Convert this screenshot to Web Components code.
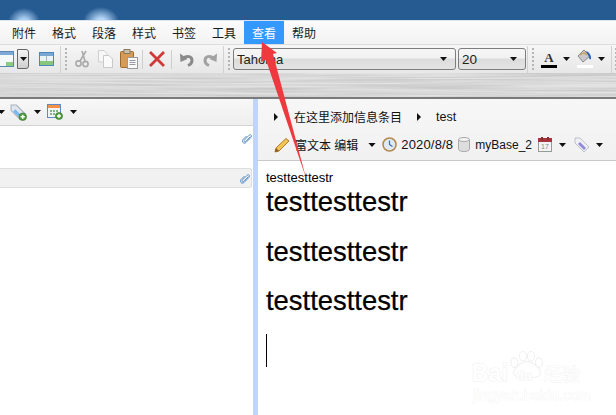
<!DOCTYPE html>
<html lang="zh"><head><meta charset="utf-8"><title>myBase</title>
<style>html,body{margin:0;padding:0;width:616px;height:415px;overflow:hidden;background:#fff;font-family:"Liberation Sans","Noto Sans CJK SC",sans-serif}</style>
</head><body>
<app-shell>
  <title-bar></title-bar>
  <menu-bar></menu-bar>
  <main-toolbar></main-toolbar>
  <brushed-strip></brushed-strip>
  <work-area></work-area>
</app-shell>
<arrow-overlay></arrow-overlay>
<baidu-mark></baidu-mark>
<script>
function def(name, html){
  customElements.define(name, class extends HTMLElement{
    constructor(){super();this.attachShadow({mode:'open'}).innerHTML=html;}
  });
}
const FONT='"Liberation Sans","Noto Sans CJK SC",sans-serif';
const caret=(w=9,h=5)=>`<svg width="${w}" height="${h}" viewBox="0 0 9 5"><path d="M0 0H9L4.5 5Z" fill="#111"/></svg>`;
const addBadge=`<circle cx="12" cy="12" r="3.6" fill="#4f9a3c" stroke="#2f6e22" stroke-width=".5"/><path d="M10 12h4M12 10v4" stroke="#fff" stroke-width="1.3"/>`;
const undo=c=>`<path d="M4.500 6C8 3.200 13 4.300 13 8.500 13 10.800 11.200 12.500 9 13.500" fill="none" stroke="${c}" stroke-width="3"/><path d="M1 1.500 1.500 10 8.500 7Z" fill="${c}"/>`;

def('app-shell',`<style>:host{display:flex;flex-direction:column;width:616px;height:415px;overflow:hidden}</style><slot></slot>`);

def('title-bar',`<style>:host{display:block;height:20px;flex:none;border-bottom:1px solid #dbe4ee;
background:radial-gradient(ellipse 16px 14px at 24px 22px,#a9cef3 0,#a9cef3 25%,rgba(169,206,243,0) 100%),radial-gradient(ellipse 18px 15px at 101px 22px,#b4d6f6 0,#b4d6f6 25%,rgba(180,214,246,0) 100%),#265b92}</style>`);

def('menu-bar',`<style>:host{display:flex;height:23px;flex:none;padding-left:4px;background:linear-gradient(#fbfbfb,#f3f3f3);font:12px ${FONT};color:#1a1a1a}
span{width:40px;display:flex;align-items:center;justify-content:center}
.on{background:#3399ff;color:#fff}</style>
<span>附件</span><span>格式</span><span>段落</span><span>样式</span><span>书签</span><span>工具</span><span class="on">查看</span><span>帮助</span>`);

const grip=`<svg style="display:block" width="4" height="22" viewBox="0 0 4 22"><g fill="#b5b5b5"><rect x="1" y="0" width="2" height="2"/><rect x="1" y="4" width="2" height="2"/><rect x="1" y="8" width="2" height="2"/><rect x="1" y="12" width="2" height="2"/><rect x="1" y="16" width="2" height="2"/><rect x="1" y="20" width="2" height="2"/></g></svg>`;
def('main-toolbar',`<style>
:host{display:flex;align-items:center;height:29px;flex:none;box-sizing:border-box;border-top:1px solid #dcdcdc;background:linear-gradient(#f6f6f6,#e7e7e7);font:13px "Liberation Sans",sans-serif;color:#222;overflow:hidden}
.viewbtn{width:14px;height:16px;flex:none;box-sizing:border-box;border:1px solid #5b87b5;border-left:0;background:linear-gradient(#7ea9d6 0 3px,transparent 3px),linear-gradient(#8ccb82,#8ccb82) right bottom/7px 4px no-repeat,#f4f8f6}
.drop{width:12px;height:20px;flex:none;box-sizing:border-box;border:1px solid #666;border-radius:0 3px 3px 0;background:linear-gradient(#f4f4f4,#cfcfcf);display:flex;align-items:center;justify-content:center;margin-left:3px}
.sep{width:1px;height:27px;background:#d2d2d2;flex:none}
.sm{width:1px;height:19px;background:#cfcfcf;flex:none}
svg{flex:none;display:block}
.combo{box-sizing:border-box;height:22px;border:1px solid #7d7d7d;border-radius:3px;background:linear-gradient(#f6f6f6 0,#f2f2f2 45%,#dcdcdc 50%,#e4e4e4);display:flex;align-items:center;justify-content:space-between;padding:0 8px 0 3px;flex:none}
</style>
<span class="viewbtn"></span><span class="drop">${caret(7,4)}</span>
<svg style="margin-left:10px" width="15" height="14" viewBox="0 0 15 14"><rect x=".5" y=".5" width="14" height="13" fill="#eaf3f4" stroke="#4d86bb"/><rect x="1" y="1" width="13" height="3" fill="#79a6d2"/><path d="M7.500 4v9" stroke="#9fb7c9"/><rect x="1" y="9" width="13" height="4" fill="#86c77c"/></svg>
<span class="sep" style="margin-left:6px"></span>
<span style="margin-left:3px">${grip}</span>
<svg style="margin-left:6px" width="16" height="18" viewBox="0 0 16 18"><g fill="none" stroke="#aaa" stroke-width="1.6"><path d="M12 1 6 11M8 1l3 10"/><circle cx="4.500" cy="13.500" r="2.600"/><circle cx="11.500" cy="14" r="2.600"/></g></svg>
<svg style="margin-left:7px" width="17" height="18" viewBox="0 0 17 18"><path d="M1.500.5H7l3 3V12H1.500Z" fill="#f7f7f7" stroke="#cfcfcf"/><path d="M6.500 5.500H12l3.500 3.500V17.500H6.500Z" fill="#fafafa" stroke="#c9c9c9"/></svg>
<svg style="margin-left:6px" width="18" height="20" viewBox="0 0 18 20"><rect x=".5" y="2.500" width="13" height="16" rx="1" fill="#d69c55" stroke="#9c6a2e"/><rect x="4" y="0.500" width="6" height="4" fill="#c9c0ae" stroke="#8c7a5c"/><rect x="7.500" y="8.500" width="10" height="11" fill="#fafafa" stroke="#9a9a9a"/><path d="M9.500 11.500h6M9.500 13.500h6M9.500 15.500h6" stroke="#999"/></svg>
<span class="sm" style="margin-left:4px"></span>
<svg style="margin-left:6px" width="16" height="16" viewBox="0 0 16 16"><path d="M2 2 14 14M14 2 2 14" stroke="#d0393a" stroke-width="2.8" stroke-linecap="square"/></svg>
<span class="sm" style="margin-left:6px"></span>
<svg style="margin-left:7px" width="16" height="15" viewBox="0 0 16 15">${undo('#8a8a8a')}</svg>
<svg style="margin-left:7px;transform:scaleX(-1)" width="16" height="15" viewBox="0 0 16 15">${undo('#a2a2a2')}</svg>
<span class="sep" style="margin-left:5px"></span>
<span style="margin-left:3px">${grip}</span>
<span class="combo" style="width:223px;margin-left:2px"><span>Tahoma</span>${caret(7,4)}</span>
<span class="combo" style="width:68px;margin-left:2px"><span style="font-size:13.500px">20</span>${caret(7,4)}</span>
<span class="sep" style="margin-left:1px"></span>
<span style="margin-left:3px">${grip}</span>
<span style="display:flex;flex-direction:column;align-items:center;margin-left:6px;width:16px;flex:none;font:bold 13px 'Liberation Serif',serif;line-height:13px;color:#333">A<span style="display:block;width:16px;height:3px;background:#000;margin-top:1px"></span></span>
<span style="margin-left:6px">${caret(7,4)}</span>
<svg style="margin-left:7px" width="16" height="20" viewBox="0 0 16 20"><path d="M7 1 1 7l5 6 7-6Z" fill="#c9c9c9" stroke="#888"/><path d="M9 2c3 1 5.500 4 5 8-1 1-2 0-2-2Z" fill="#2d62b8"/><path d="M3 6c2-2 5-3 7 0" fill="none" stroke="#c9a15c" stroke-width="1.500"/><rect y="16" width="16" height="3" fill="#fff"/></svg>
<span style="margin-left:5px">${caret(7,4)}</span>
<span class="sep" style="margin-left:6px"></span>
<span style="margin-left:2px">${grip}</span>`);

def('brushed-strip',`<style>:host{display:block;height:24px;flex:none;border-bottom:2px solid #7a7a7a;background-color:#dcdcdc;overflow:hidden;position:relative}
svg{position:absolute;inset:0;width:100%;height:100%}</style>
<svg preserveAspectRatio="none"><filter id="b" x="0" y="0" width="100%" height="100%" color-interpolation-filters="sRGB"><feTurbulence type="fractalNoise" baseFrequency="0.006 0.6" numOctaves="3" seed="4"/><feColorMatrix values="0 0 0 0 .68  0 0 0 0 .68  0 0 0 0 .68  0.9 0 0 0 -0.25"/></filter><rect width="100%" height="100%" fill="#e2e2e2"/><rect width="100%" height="100%" filter="url(#b)"/></svg>`);

def('work-area',`<style>:host{display:flex;flex:1;min-height:0}
.split{width:5px;flex:none;background:#c1d5f8}</style>
<left-pane></left-pane><span class="split"></span><right-pane></right-pane>`);

const clip=`<svg width="10" height="11" viewBox="0 0 10 11"><path d="M8.500 3.500 3.600 8.600c-1 1-2.400-.4-1.400-1.400L7 2.300c1.600-1.600 3.600.5 2 2L4 9.500c-2 2-5-.8-3-3L4.500 3" fill="none" stroke="#5b8fc7" stroke-width="1"/></svg>`;
def('left-pane',`<style>:host{display:flex;flex-direction:column;width:253px;flex:none;background:#fff;overflow:hidden}
.tools{height:27px;flex:none;box-sizing:border-box;border-bottom:1px solid #d4d4d4;background:linear-gradient(#f8f8f8,#eeeeee);display:flex;align-items:center}
svg{display:block;flex:none}
.list{height:42px;flex:none;display:flex;justify-content:flex-end;padding:7px 1px 0 0;box-sizing:border-box}
.row{height:20px;flex:none;box-sizing:border-box;border:1px solid #dedede;border-left:0;border-radius:0 3px 3px 0;background:#f1f1f1;display:flex;justify-content:flex-end;align-items:center;padding-right:1px;width:252px}
</style>
<div class="tools">
  <span style="margin-left:-2px">${caret(7,4)}</span>
  <svg style="margin-left:5px" width="17" height="17" viewBox="0 0 16 16"><path d="M1 1h5l8 8-5 5-8-8Z" fill="#dfe6ee" stroke="#aab2ba"/><path d="M5 5l5 5-2 2-5-5Z" fill="#74b8ef"/>${addBadge}</svg>
  <span style="margin-left:7px">${caret(7,4)}</span>
  <svg style="margin-left:6px" width="16" height="16" viewBox="0 0 16 16"><rect x=".5" y=".5" width="13" height="13" fill="#f3f3f3" stroke="#5a8bc4"/><rect x="1" y="1" width="12" height="3" fill="#f0924a"/><path d="M3 6h2v2H3ZM6 6h2v2H6ZM9 6h2v2H9ZM3 9h2v2H3ZM6 9h2v2H6Z" fill="#7fb48a"/>${addBadge}</svg>
  <span style="margin-left:7px">${caret(7,4)}</span>
</div>
<div class="list">${clip}</div>
<div class="row">${clip}</div>`);

def('right-pane',`<style>:host{display:flex;flex-direction:column;flex:1;min-width:0}</style><note-head></note-head><note-body></note-body>`);

def('note-head',`<style>:host{display:flex;flex-direction:column;height:62px;flex:none;box-sizing:border-box;border-bottom:1px solid #c9c9c9;background:linear-gradient(#f7f7f7,#f1f1f1);font:12px ${FONT};color:#111}
.r{display:flex;align-items:center;flex:none}
.r1{height:32px;padding-left:16px;padding-top:3px;box-sizing:border-box}
.r2{height:28px;padding-left:16px;padding-bottom:1px;box-sizing:border-box}
svg{display:block;flex:none}
.t{white-space:nowrap}
</style>
<div class="r r1"><svg width="4" height="8" viewBox="0 0 4 8"><path d="M0 0 4 4 0 8Z" fill="#111"/></svg><span class="t" style="margin-left:16px">在这里添加信息条目</span><svg style="margin-left:15px" width="4" height="8" viewBox="0 0 4 8"><path d="M0 0 4 4 0 8Z" fill="#111"/></svg><span class="t" style="margin-left:15px;font-size:12.500px">test</span></div>
<div class="r r2">
<svg width="16" height="16" viewBox="0 0 16 16"><path d="M12 1.500 15 4 5 14l-4 1 1-4Z" fill="#f3c554" stroke="#b17a25"/><path d="M2 11l3 3-4 1Z" fill="#8a5a25"/></svg>
<span class="t" style="margin-left:5px">富文本 编辑</span>
<span style="margin-left:10px;line-height:0">${caret(8,4)}</span>
<svg style="margin-left:6px" width="15" height="15" viewBox="0 0 15 15"><circle cx="7.500" cy="7.500" r="6.500" fill="#dfeaf5" stroke="#b48a4f" stroke-width="1.600"/><path d="M7.500 3.500v4l3 2" fill="none" stroke="#3f6ea5" stroke-width="1.200"/></svg>
<span class="t" style="margin-left:4px;font-size:13px;letter-spacing:.15px;width:52px;flex:none">2020/8/8</span>
<svg style="margin-left:5px" width="12" height="15" viewBox="0 0 12 15"><path d="M.5 2.500v10c0 1 2.500 2 5.500 2s5.500-1 5.500-2v-10" fill="#dedede" stroke="#aaa"/><ellipse cx="6" cy="2.500" rx="5.500" ry="2" fill="#f2f2f2" stroke="#aaa"/></svg>
<span class="t" style="margin-left:5px;width:57px;flex:none">myBase_2</span>
<svg style="margin-left:6px" width="14" height="15" viewBox="0 0 14 15"><rect x=".5" y="2" width="13" height="12.500" fill="#f3f3f3" stroke="#999"/><rect x="0" y="1" width="14" height="4" fill="#a8333c"/><rect x="3" y="0" width="2" height="3" fill="#8a2a30"/><rect x="9" y="0" width="2" height="3" fill="#8a2a30"/><text x="3" y="12" font-size="7" fill="#888" font-family="Liberation Sans">17</text></svg>
<span style="margin-left:7px;line-height:0">${caret(7,4)}</span>
<svg style="margin-left:8px" width="16" height="16" viewBox="0 0 16 16"><path d="M1 1h5l9 9-5 5-9-9Z" fill="#eef0f6" stroke="#c0c0c8"/><path d="M6 5l6 6-2 2-6-6Z" fill="#9488dc"/></svg>
<span style="margin-left:6px;line-height:0">${caret(7,4)}</span>
</div>`);

def('note-body',`<style>:host{display:block;flex:1;background:#fff;padding:9px 0 0 8px;color:#000;font-family:"Liberation Sans",sans-serif}
.s{font-size:13px;line-height:15px;height:16px}
.b{font-size:27.400px;line-height:32px;height:32px;-webkit-text-stroke:.25px #000}
.g{height:17.500px}
.caret{width:1px;height:33px;background:#000;margin-top:17px}</style>
<div class="s">testtesttestr</div>
<div class="b">testtesttestr</div><div class="g"></div>
<div class="b">testtesttestr</div><div class="g"></div>
<div class="b">testtesttestr</div>
<div class="caret"></div>`);

def('arrow-overlay',`<style>:host{position:absolute;left:0;top:0;width:616px;height:415px;pointer-events:none}svg{display:block}</style>
<svg width="616" height="415" viewBox="0 0 616 415"><path d="M262 42 277 53 273 54 306 178 266 60 261 62Z" fill="#ee3a3f"/></svg>`);

def('baidu-mark',`<style>:host{position:absolute;left:472px;top:345px;width:140px;height:62px;pointer-events:none;font-family:"Liberation Sans","Noto Sans CJK SC",sans-serif}
.t{position:absolute;white-space:nowrap;color:#fff;-webkit-text-stroke:1px #f0f0f0;paint-order:stroke}
svg{position:absolute;left:36px;top:2px}</style>
<svg width="38" height="36" viewBox="0 0 48 36"><g fill="#fff" stroke="#f0f0f0" stroke-width="1.300"><ellipse cx="8" cy="15" rx="4.500" ry="6"/><ellipse cx="19" cy="7" rx="4.500" ry="6"/><ellipse cx="29" cy="7" rx="4.500" ry="6"/><ellipse cx="39" cy="15" rx="4.500" ry="6"/><path d="M24 14c8 0 17 9 17 14s-9 7-17 5c-8 2-17 0-17-5s9-14 17-14Z"/></g></svg>
<span class="t" style="left:0;top:15px;font:bold 23px 'Liberation Sans'">Bai</span>
<span class="t" style="left:44px;top:23px;font:bold 13px 'Liberation Sans'">du</span>
<span class="t" style="left:72px;top:15px;font:18px 'Noto Sans CJK SC';-webkit-text-stroke-width:.7px">经验</span>
<span class="t" style="left:1px;top:42px;font:14px 'Liberation Sans';letter-spacing:.3px;-webkit-text-stroke-width:.6px">jingyan.baidu.com</span>`);
</script>
</body></html>
